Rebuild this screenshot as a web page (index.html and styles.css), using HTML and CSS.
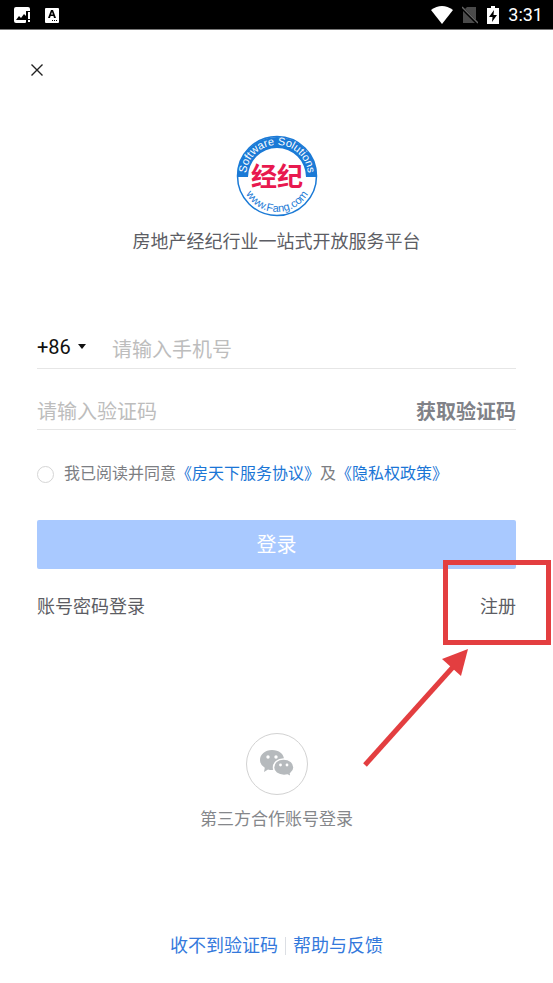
FILE: index.html
```html
<!DOCTYPE html>
<html lang="zh-CN">
<head>
    <meta charset="UTF-8">
    <meta name="viewport" content="width=device-width, initial-scale=1.0">
    <title>登录</title>
    <link rel="stylesheet" href="styles.css">
</head>
<body>
    <header class="status-bar">
        <div class="status-icons">
            <svg width="16" height="16" viewBox="0 0 16 16">
                <path fill="#fff" d="M2 0h12q2 0 2 2v2h-4v11q0 1-1 1H2q-2 0-2-2V2Q0 0 2 0z"/>
                <path fill="#000" d="M2 13l3-4 2 2 3-4 2 2v4z"/>
                <path fill="#fff" d="M14 5h2v7h-2zM14 13h2v2h-2z"/>
            </svg>
            <svg width="14" height="16" viewBox="0 0 14 16">
                <rect width="14" height="15" y="1" rx="1" fill="#fff"/>
                <path fill="#000" fill-rule="evenodd" d="M6 3h2l3 8H9l-.6-2H5.600L5 11H3zM7 5L6.100 7.600h1.800z"/>
                <path fill="#000" d="M7 13h1v1H7zM9 13h1v1H9zM11 13h1v1h-1z"/>
            </svg>
        </div>
        <div class="status-icons status-right">
            <svg width="22" height="18" viewBox="0 0 22 18">
                <path fill="#fff" d="M0 4Q11-4 22 4L11 18z"/>
            </svg>
            <svg width="16" height="18" viewBox="0 0 16 18">
                <path fill="#4a4a4a" d="M5 1h9v16H1V5z"/>
                <path stroke="#000" stroke-width="3" d="M0 2l16 16"/>
                <path stroke="#666" stroke-width="1.500" d="M0 1l16 16"/>
            </svg>
            <svg width="12" height="18" viewBox="0 0 12 18">
                <path fill="#fff" d="M4 0h4v2h4v16H0V2h4z"/>
                <path fill="#000" d="M7 4L2 11h3.500L5 16l5-7H6.500z"/>
            </svg>
            <span class="time">3:31</span>
        </div>
    </header>

    <main class="page">
        <button class="close" type="button" aria-label="关闭">
            <svg width="12" height="12" viewBox="0 0 12 12">
                <path d="M.5.5l11 11M11.500.5l-11 11" stroke="#222" stroke-width="1.400" fill="none"/>
            </svg>
        </button>

        <div class="brand">
            <svg width="82" height="82" viewBox="0 0 82 82">
                <defs>
                    <path id="arc-top" d="M10 41a31 31 0 0 1 62 0"/>
                    <path id="arc-bottom" d="M5 41a36 36 0 0 0 72 0"/>
                </defs>
                <circle cx="41" cy="41" r="39.500" fill="#fff" stroke="#1b7ad6" stroke-width="1.500"/>
                <path fill="#1b7ad6" d="M1 42a40 40 0 0 1 80 0H70a29 29 0 0 0-58 0z"/>
                <text class="logo-top"><textPath href="#arc-top" startOffset="50%">Software Solutions</textPath></text>
                <text class="logo-name" x="41" y="51">经纪</text>
                <text class="logo-bottom"><textPath href="#arc-bottom" startOffset="50%">www.Fang.com</textPath></text>
            </svg>
            <h1>房地产经纪行业一站式开放服务平台</h1>
        </div>

        <form class="login-form">
            <div class="field">
                <div class="area-code">
                    <select id="area" name="area" aria-label="国家区号">
                        <option value="86">+86</option>
                    </select>
                    <svg width="8" height="5" viewBox="0 0 8 5"><path d="M0 0h8L4 5z" fill="#111"/></svg>
                </div>
                <input class="phone" type="tel" name="phone" aria-label="手机号" placeholder="请输入手机号">
            </div>
            <div class="field">
                <input type="text" name="code" aria-label="验证码" placeholder="请输入验证码">
                <button class="get-code" type="button">获取验证码</button>
            </div>
            <div class="agreement">
                <input type="checkbox" id="agree" name="agree">
                <label for="agree">我已阅读并同意<a href="#">《房天下服务协议》</a>及<a href="#">《隐私权政策》</a></label>
            </div>
            <button class="submit" type="submit">登录</button>
        </form>

        <div class="links">
            <a href="#">账号密码登录</a>
            <div class="register">
                <a href="#">注册</a>
                <div class="mark-box"></div>
                <svg class="mark-arrow" width="108" height="120" viewBox="0 0 108 120">
                    <path d="M3 116L91 18" stroke="#e33e40" stroke-width="5" fill="none"/>
                    <path d="M106 0L99 27 80 10z" fill="#e33e40"/>
                </svg>
            </div>
        </div>

        <div class="third-party">
            <button class="wechat" type="button" aria-label="微信登录">
                <svg width="34" height="28" viewBox="0 0 34 28">
                    <path fill="#b6babd" d="M12 0c7 0 12 4 12 9.500S19 20 12 20q-2 0-4-.6L4 22l.8-4.200Q0 15 0 10C0 4.500 5 0 12 0z"/>
                    <path fill="#b6babd" stroke="#fff" stroke-width="1.500" d="M23.500 9c6 0 10.500 3.500 10.500 8.500 0 2.500-1.300 4.500-3.500 6l.7 3.500-3.700-2q-1.700.4-3.500.4c-6 0-10.500-3.400-10.500-7.900S17.500 9 23.500 9z"/>
                    <circle cx="8" cy="7" r="1.700" fill="#fff"/>
                    <circle cx="16" cy="7" r="1.700" fill="#fff"/>
                    <circle cx="20.500" cy="15" r="1.400" fill="#fff"/>
                    <circle cx="27" cy="15" r="1.400" fill="#fff"/>
                </svg>
            </button>
            <p>第三方合作账号登录</p>
        </div>

        <footer class="help">
            <a href="#">收不到验证码</a>
            <a href="#">帮助与反馈</a>
        </footer>
    </main>
</body>
</html>
```
FILE: styles.css
```css
* {
    box-sizing: border-box;
}
body {
    margin: 0;
    min-height: 100vh;
    display: flex;
    flex-direction: column;
    background-color: #fff;
    color: #5c5d64;
    font-family: Roboto, "Noto Sans CJK SC", sans-serif;
    font-size: 18px;
    line-height: 28px;
}
a {
    color: inherit;
    text-decoration: none;
}
button, input, select {
    font: inherit;
    color: inherit;
    background: none;
    border: none;
    border-radius: 0;
    padding: 0;
    margin: 0;
}
button {
    cursor: pointer;
}
svg {
    display: block;
}
.status-bar {
    display: flex;
    justify-content: space-between;
    align-items: center;
    height: 30px;
    padding: 0 10px 0 14px;
    background-color: #000;
    border-bottom: 1px solid #777;
    color: #fff;
}
.status-icons {
    display: flex;
    align-items: center;
    gap: 15px;
}
.status-right {
    gap: 9px;
}
.page {
    flex: 1;
    display: flex;
    flex-direction: column;
    padding: 30px 37px 28px;
}
.close {
    align-self: flex-start;
    padding: 4px;
    margin-left: -10px;
}
.brand {
    display: flex;
    flex-direction: column;
    align-items: center;
    gap: 11px;
    margin-top: 55px;
}
.brand h1 {
    margin: 0;
    font-size: 18px;
    font-weight: 400;
}
.logo-top, .logo-bottom {
    font-family: "Liberation Sans", Arial, sans-serif;
    font-size: 11px;
    text-anchor: middle;
}
.logo-top {
    fill: #fff;
}
.logo-bottom {
    fill: #1b7ad6;
}
.logo-name {
    font-family: "Noto Sans CJK SC", sans-serif;
    font-size: 26px;
    font-weight: 700;
    text-anchor: middle;
    fill: #e8194f;
}
.login-form {
    margin-top: 69px;
    font-size: 20px;
}
.field {
    display: flex;
    align-items: center;
    height: 44px;
    border-bottom: 1px solid #e6e6e6;
}
.field + .field {
    height: 40px;
    margin-top: 21px;
    padding-top: 4px;
}
.field input {
    flex: 1;
    min-width: 0;
    outline: none;
}
.field input::placeholder {
    color: #bdbdbd;
    opacity: 1;
}
.area-code {
    display: flex;
    align-items: center;
    gap: 7px;
    width: 75px;
    color: #111;
}
.area-code select {
    appearance: none;
}
.field .phone {
    padding-top: 7px;
}
.get-code {
    font-weight: 700;
    color: #808288;
}
.agreement {
    display: flex;
    align-items: center;
    gap: 10px;
    margin-top: 30px;
    font-size: 16px;
    color: #7c7e83;
}
.agreement input {
    appearance: none;
    width: 17px;
    height: 17px;
    border: 1px solid #d5d5d5;
    border-radius: 50%;
}
.agreement input:checked {
    background-color: #1b7ad6;
}
.agreement a {
    color: #1b76d6;
}
.submit {
    display: block;
    width: 100%;
    height: 49px;
    margin-top: 32px;
    background-color: #a9c9ff;
    border-radius: 2px;
    color: #fff;
}
.links {
    display: flex;
    justify-content: space-between;
    margin-top: 24px;
}
.register {
    position: relative;
}
/* highlight drawn over the register link */
.mark-box {
    position: absolute;
    top: -33px;
    right: -35px;
    width: 108px;
    height: 85px;
    border: 5px solid #e33e40;
    pointer-events: none;
}
.mark-arrow {
    position: absolute;
    top: 56px;
    right: 46px;
    pointer-events: none;
}
.third-party {
    display: flex;
    flex-direction: column;
    align-items: center;
    gap: 10px;
    margin-top: 112px;
    font-size: 17px;
    color: #85878b;
}
.third-party p {
    margin: 0;
}
.wechat {
    display: flex;
    justify-content: center;
    align-items: center;
    width: 62px;
    height: 62px;
    border: 1px solid #d2d2d2;
    border-radius: 50%;
}
.help {
    display: flex;
    justify-content: center;
    align-items: center;
    margin-top: auto;
    color: #3479dc;
}
.help a {
    line-height: 18px;
}
.help a + a {
    margin-left: 7px;
    padding-left: 7px;
    border-left: 1px solid #dcdfe4;
}
```
